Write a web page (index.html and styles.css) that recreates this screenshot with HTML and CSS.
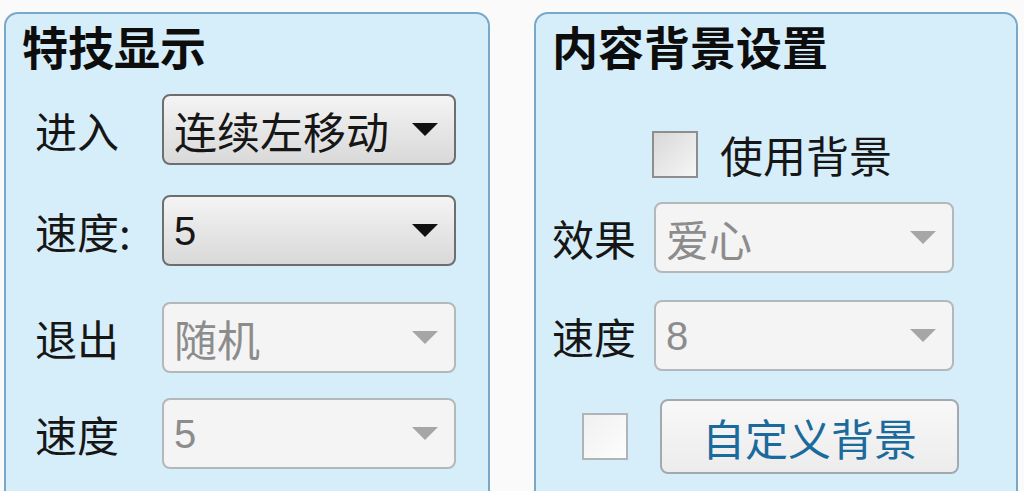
FILE: index.html
```html
<!DOCTYPE html>
<html lang="zh-CN">
<head>
  <meta charset="UTF-8">
  <title>特技显示</title>
  <link rel="stylesheet" href="styles.css">
</head>
<body>
  <div class="wrap">
    <div class="panel panel-left">
      <div class="title">特技显示</div>

      <div class="row row-1">
        <span class="label">进入</span>
        <div class="combo"><span class="value">连续左移动</span><span class="arrow"></span></div>
      </div>
      <div class="row row-2">
        <span class="label">速度:</span>
        <div class="combo"><span class="value num">5</span><span class="arrow"></span></div>
      </div>
      <div class="row row-3">
        <span class="label">退出</span>
        <div class="combo disabled"><span class="value">随机</span><span class="arrow"></span></div>
      </div>
      <div class="row row-4">
        <span class="label">速度</span>
        <div class="combo disabled"><span class="value num">5</span><span class="arrow"></span></div>
      </div>
    </div>

    <div class="panel panel-right">
      <div class="title">内容背景设置</div>

      <div class="use-bg">
        <span class="check"></span>
        <span class="check-label">使用背景</span>
      </div>
      <div class="row rrow-1">
        <span class="label">效果</span>
        <div class="combo disabled"><span class="value">爱心</span><span class="arrow"></span></div>
      </div>
      <div class="row rrow-2">
        <span class="label">速度</span>
        <div class="combo disabled"><span class="value num">8</span><span class="arrow"></span></div>
      </div>
      <div class="custom">
        <span class="check light"></span>
        <button class="btn">自定义背景</button>
      </div>
    </div>
  </div>
</body>
</html>
```

FILE: styles.css
```css
body {
  margin: 0;
  background: #fafafa;
  font-family: "Noto Sans CJK SC", "Liberation Sans", sans-serif;
  color: #161616;
  overflow: hidden;
}
.wrap {
  display: flex;
  gap: 44px;
  padding: 12px 0 0 4px;
}
.panel {
  box-sizing: border-box;
  height: 500px;
  background: #d6eefa;
  border: 2px solid #79a8c8;
  border-radius: 14px;
}
.panel-left {
  width: 486px;
}
.panel-right {
  width: 484px;
}
.title {
  font-size: 46px;
  font-weight: 700;
  line-height: 46px;
  margin-top: 8px;
  padding-left: 16px;
  color: #0d0d0d;
}
.row {
  display: flex;
  align-items: center;
}
.panel-left .row {
  padding-left: 29px;
}
.panel-left .label {
  width: 127px;
}
.label {
  font-size: 42px;
  line-height: 48px;
}
.row-1 { margin-top: 26px; }
.row-2 { margin-top: 30px; }
.row-3 { margin-top: 36px; }
.row-4 { margin-top: 25px; }

.combo {
  box-sizing: border-box;
  width: 294px;
  height: 71px;
  border: 2px solid #6e6e6e;
  border-radius: 8px;
  background: linear-gradient(#f4f4f4, #e6e6e6 50%, #d9d9d9);
  display: flex;
  align-items: center;
  padding: 0 16px 0 10px;
}
.value {
  flex: 1;
  overflow: hidden;
  white-space: nowrap;
  font-size: 43px;
  line-height: 64px;
  margin-right: 6px;
  color: #161616;
}
.value.num {
  font-family: "Liberation Sans", sans-serif;
  font-size: 40px;
}
.arrow {
  width: 0;
  height: 0;
  border-left: 13px solid transparent;
  border-right: 13px solid transparent;
  border-top: 13px solid #111;
}
.combo.disabled {
  border-color: #b3b8bb;
  background: #f4f4f4;
}
.combo.disabled .value {
  color: #8c8c8c;
}
.combo.disabled .arrow {
  border-top-color: #a6a6a6;
}

.panel-right .row {
  padding-left: 16px;
}
.panel-right .label {
  width: 102px;
}
.panel-right .combo {
  width: 300px;
}
.use-bg {
  display: flex;
  align-items: center;
  margin-top: 62px;
  padding-left: 116px;
}
.check {
  box-sizing: border-box;
  width: 46px;
  height: 47px;
  border: 2px solid #8e8e8e;
  background: linear-gradient(135deg, #d8d8d8, #f6f6f6);
}
.check.light {
  border-color: #b0b4b6;
  background: linear-gradient(135deg, #f0f0f0, #fdfdfd);
}
.check-label {
  font-size: 43px;
  line-height: 48px;
  margin-left: 22px;
}
.rrow-1 { margin-top: 24px; }
.rrow-2 { margin-top: 27px; }
.custom {
  display: flex;
  align-items: center;
  margin-top: 28px;
  padding-left: 46px;
}
.btn {
  box-sizing: border-box;
  width: 299px;
  height: 75px;
  margin-left: 32px;
  border: 2px solid #a3aaae;
  border-radius: 8px;
  background: linear-gradient(#f8f8f8, #ececec);
  font-family: "Noto Sans CJK SC", sans-serif;
  font-size: 43px;
  color: #1b6a9c;
  padding: 0;
}
```
